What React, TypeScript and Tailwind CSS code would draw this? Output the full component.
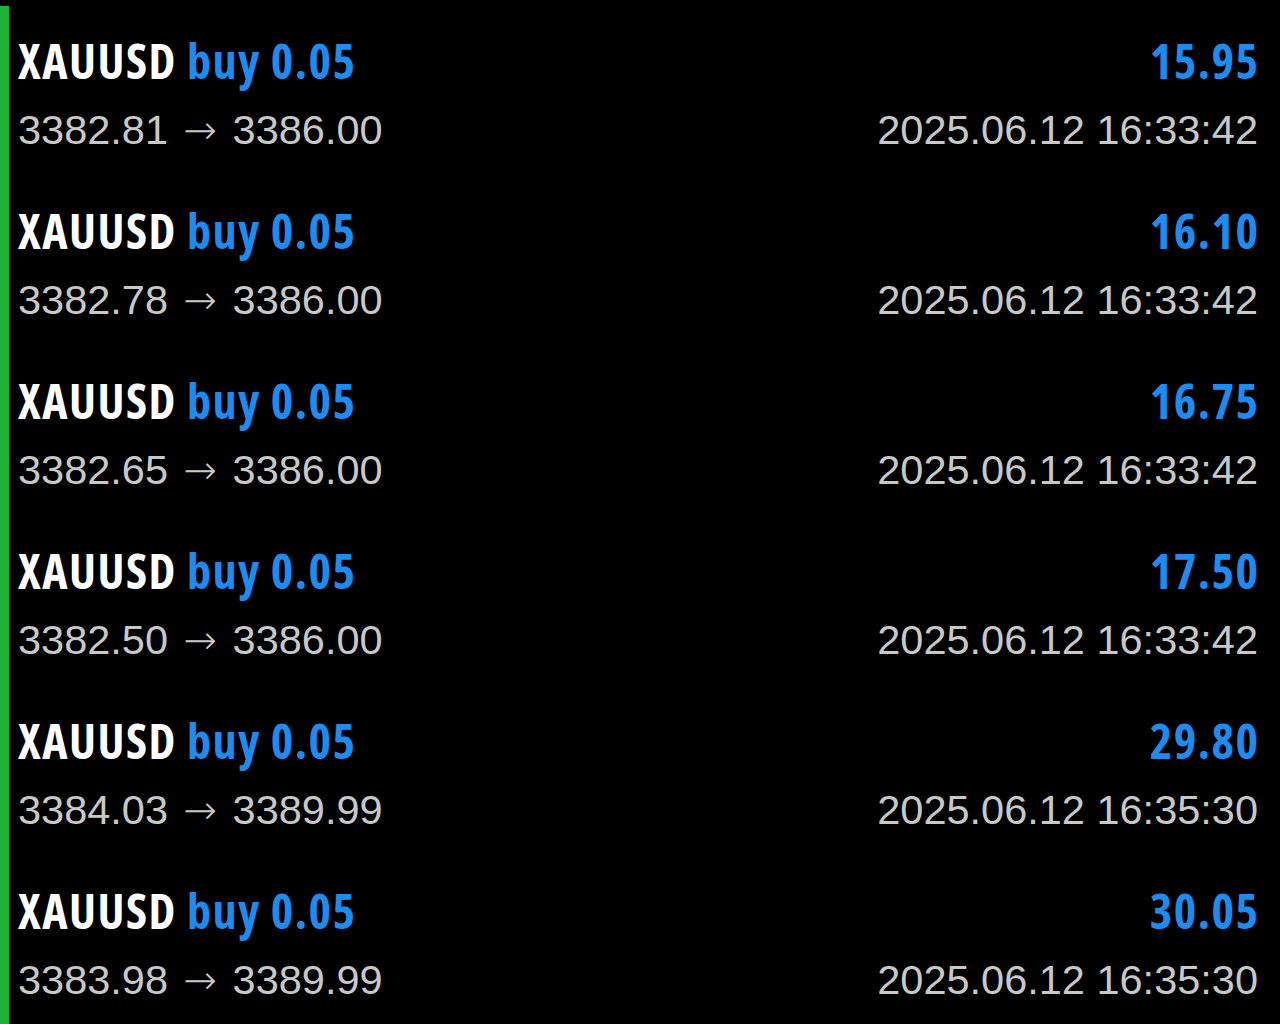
import React from "react";

const rows = [
  { open: "3382.81", close: "3386.00", profit: "15.95", time: "2025.06.12 16:33:42" },
  { open: "3382.78", close: "3386.00", profit: "16.10", time: "2025.06.12 16:33:42" },
  { open: "3382.65", close: "3386.00", profit: "16.75", time: "2025.06.12 16:33:42" },
  { open: "3382.50", close: "3386.00", profit: "17.50", time: "2025.06.12 16:33:42" },
  { open: "3384.03", close: "3389.99", profit: "29.80", time: "2025.06.12 16:35:30" },
  { open: "3383.98", close: "3389.99", profit: "30.05", time: "2025.06.12 16:35:30" },
];

export default function App() {
  return (
    <div className="w-[1280px] h-[1024px] bg-black flex overflow-hidden">
      <div className="w-[9px] mt-[6px] bg-[#1db33a] shrink-0" />
      <div className="flex-1 flex flex-col pl-[9px] pr-[22px]">
        {rows.map((r, i) => (
          <div key={i} className="h-[170px] shrink-0 flex flex-col pt-[31px]">
            <div className="flex justify-between items-center h-[60px]">
              <span className="font-['Open_Sans',sans-serif] font-bold text-[48px] leading-[60px] font-stretch-[87%] tracking-[1.5px] whitespace-nowrap">
                <span className="text-white">XAUUSD</span>{" "}
                <span className="text-[#1c8cf0]">buy 0.05</span>
              </span>
              <span className="font-['Open_Sans',sans-serif] font-bold text-[48px] leading-[60px] font-stretch-[87%] tracking-[1.5px] text-[#1c8cf0] -mr-[1.5px]">
                {r.profit}
              </span>
            </div>
            <div className="flex justify-between items-center h-[48px] mt-[15px] font-['Liberation_Sans',Arial,sans-serif] text-[41.5px] leading-[48px] text-[#c8c8c8] whitespace-nowrap">
              <span>
                {r.open}{" "}
                <span className="font-['DejaVu_Sans',sans-serif] font-extralight text-[40px] mx-[4px]">→</span>{" "}
                {r.close}
              </span>
              <span>{r.time}</span>
            </div>
          </div>
        ))}
      </div>
    </div>
  );
}
